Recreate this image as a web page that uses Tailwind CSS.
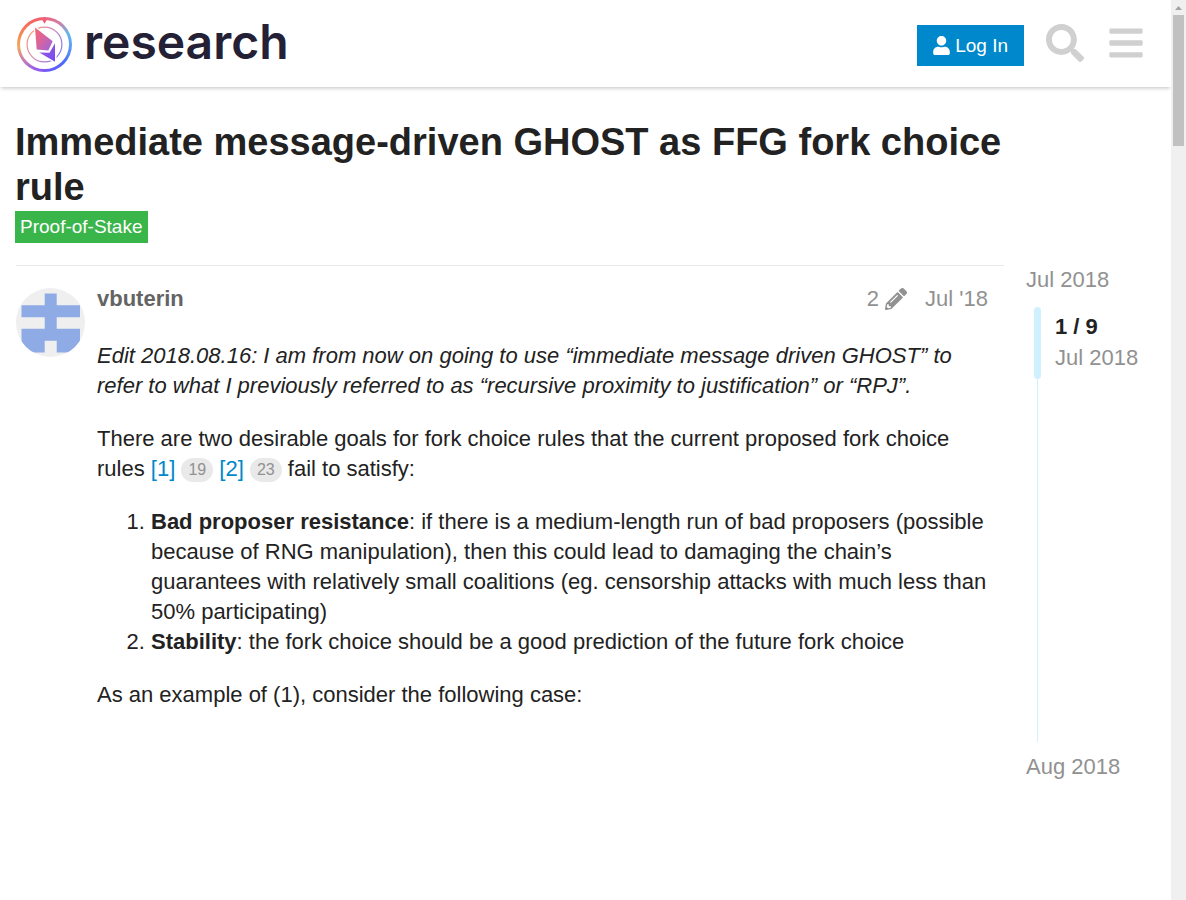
<!DOCTYPE html>
<html lang="en">
<head>
<meta charset="utf-8">
<meta name="viewport" content="width=device-width, initial-scale=1">
<title>Immediate message-driven GHOST as FFG fork choice rule</title>
<script src="https://cdn.jsdelivr.net/npm/@tailwindcss/browser@4"></script>
</head>
<body class="flex h-screen overflow-hidden bg-white font-['Liberation_Sans',Arial,sans-serif] text-[22px] leading-[30px] text-[#222]">
<div class="min-w-0 flex-1 overflow-hidden">
  <header class="flex h-[87px] items-center justify-between pr-7 pl-[17px] shadow-[0_2px_4px_-1px_rgba(0,0,0,0.25)]">
    <a href="#" class="flex items-center gap-3 pt-px text-[#242136]" aria-label="research home">
      <span class="grid size-[55px] place-items-center rounded-full bg-[conic-gradient(#f0607a,#d07fa8_35deg,#63b8ea_65deg,#5b9cf8_95deg,#4d6cfb_130deg,#6a5af8_170deg,#9a5cec_200deg,#c97fb0_235deg,#f3a95e_265deg,#f78a50_290deg,#f4675f_330deg,#f0607a)]">
        <span class="grid size-[49px] place-items-center rounded-full bg-white">
          <svg class="size-[49px]" viewBox="20 19.5 49 49" aria-hidden="true">
            <defs>
              <linearGradient id="kite" x1="0" y1="0" x2="1" y2="1"><stop offset="0" stop-color="#f8646c"/><stop offset=".45" stop-color="#d9659c"/><stop offset="1" stop-color="#9a62e0"/></linearGradient>
              <linearGradient id="fin" x1="0" y1="0" x2="1" y2="1"><stop offset="0" stop-color="#a75bd5"/><stop offset="1" stop-color="#6f4cf6"/></linearGradient>
              <linearGradient id="ring" x1="0" y1="0.2" x2="1" y2="0.8"><stop offset="0" stop-color="#f79a72"/><stop offset=".5" stop-color="#d084b8"/><stop offset="1" stop-color="#7c76f7"/></linearGradient>
            </defs>
            <circle cx="44.5" cy="44" r="17.4" fill="none" stroke="url(#ring)" stroke-width="1.2"/>
            <path d="M33.5 24.5 55.5 40 50 51.5 35.5 50.5z" fill="#fff"/>
            <path d="M50 50.5 56.5 38V64L37 51z" fill="#fff"/>
            <path d="M35 27 52.7 40.7 48.3 50 36.7 49z" fill="url(#kite)"/>
            <path d="M39.3 52 49.5 52.3 55 42.7V61.3z" fill="url(#fin)"/>
            <path d="M41.7 18.5H47.3L44.5 23.3z" fill="#ef5f70"/>
          </svg>
        </span>
      </span>
      <span class="pb-[6px] font-[Inter,sans-serif] text-[48px] leading-[49px] font-semibold">research</span>
    </a>
    <nav class="flex items-center">
      <button class="mt-1 mr-[22px] flex h-[41px] items-center gap-[5px] bg-[#0088cc] px-4 text-[19px] text-white">
        <svg class="h-[19px] w-[17px]" viewBox="0 0 448 512" fill="currentColor" aria-hidden="true"><path d="M224 256c70.7 0 128-57.3 128-128S294.7 0 224 0 96 57.3 96 128s57.3 128 128 128zm89.6 32h-16.7c-22.2 10.2-46.9 16-72.9 16s-50.6-5.8-72.9-16h-16.7C60.2 288 0 348.2 0 422.4V464c0 26.5 21.5 48 48 48h352c26.5 0 48-21.5 48-48v-41.6c0-74.2-60.2-134.4-134.4-134.4z"/></svg>
        <span>Log In</span>
      </button>
      <button class="mr-[25px] pb-[2px] text-[#d0d0d0]" aria-label="Search">
        <svg class="block size-[38px]" viewBox="0 0 512 512" fill="currentColor" aria-hidden="true"><path d="M505 442.7L405.3 343c-4.5-4.5-10.6-7-17-7H372c27.6-35.3 44-79.7 44-128C416 93.1 322.9 0 208 0S0 93.1 0 208s93.1 208 208 208c48.3 0 92.7-16.4 128-44v16.3c0 6.4 2.5 12.5 7 17l99.7 99.7c9.4 9.4 24.6 9.4 33.9 0l28.3-28.3c9.4-9.4 9.4-24.6.1-34zM208 336c-70.7 0-128-57.2-128-128 0-70.7 57.2-128 128-128 70.7 0 128 57.2 128 128 0 70.7-57.2 128-128 128z"/></svg>
      </button>
      <button class="pb-[2px] text-[#d0d0d0]" aria-label="Menu">
        <svg class="block h-[38px] w-[34px]" viewBox="0 0 448 512" fill="currentColor" aria-hidden="true"><path d="M16 132h416c8.837 0 16-7.163 16-16V76c0-8.837-7.163-16-16-16H16C7.163 60 0 67.163 0 76v40c0 8.837 7.163 16 16 16zm0 160h416c8.837 0 16-7.163 16-16v-40c0-8.837-7.163-16-16-16H16c-8.837 0-16 7.163-16 16v40c0 8.837 7.163 16 16 16zm0 160h416c8.837 0 16-7.163 16-16v-40c0-8.837-7.163-16-16-16H16c-8.837 0-16 7.163-16 16v40c0 8.837 7.163 16 16 16z"/></svg>
      </button>
    </nav>
  </header>

  <main class="px-[15px] pt-[33px]">
    <div class="mr-[130px]">
      <h1 class="text-[38px] leading-[45px] font-bold">Immediate message-driven GHOST as FFG fork choice rule</h1>
      <a href="#" class="mt-px block w-fit bg-[#3ab54a] px-[5px] py-px text-[19px] text-white">Proof-of-Stake</a>
    </div>
    <div class="mt-[22px] grid grid-cols-[minmax(0,1fr)_130px] gap-x-[22px]">
      <article class="ml-px flex gap-3 border-t border-[#e9e9e9] pt-[22px]">
        <a href="#" class="shrink-0" aria-label="vbuterin">
          <svg class="size-[69px]" viewBox="0 0 69 69" aria-hidden="true">
            <clipPath id="avatar"><circle cx="34.5" cy="34.5" r="34.5"/></clipPath>
            <g clip-path="url(#avatar)">
              <path d="M0 0h69v69H0z" fill="#efefef"/>
              <path d="M28.7 5.5H40.7V17.3H64V29.3H40.7V40.7H64V64.5H40.7V52.7H28.7V64.5H5.5V40.7H28.7V29.3H5.5V17.3H28.7z" fill="#8fabe6"/>
            </g>
          </svg>
        </a>
        <div class="min-w-0 flex-1">
          <div class="-mt-1 mr-4 flex items-center justify-between text-[#919191]">
            <a href="#" class="font-bold text-[#646464]">vbuterin</a>
            <div class="flex items-center gap-[18px]">
              <button class="flex items-center gap-[6px]">2
                <svg class="size-[22px]" viewBox="0 0 512 512" fill="currentColor" aria-label="edits"><path d="M497.9 142.1l-46.1 46.1c-4.7 4.7-12.3 4.7-17 0l-111-111c-4.7-4.7-4.7-12.3 0-17l46.1-46.1c18.7-18.7 49.1-18.7 67.9 0l60.1 60.1c18.8 18.7 18.8 49.1 0 67.9zM284.2 99.8L21.6 362.4.4 483.9c-2.9 16.4 11.4 30.6 27.8 27.8l121.5-21.3 262.6-262.6c4.7-4.7 4.7-12.3 0-17l-111-111c-4.8-4.7-12.4-4.7-17.1 0zM124.1 339.9c-5.5-5.5-5.5-14.3 0-19.8l154-154c5.5-5.5 14.3-5.5 19.8 0s5.5 14.3 0 19.8l-154 154c-5.5 5.5-14.3 5.5-19.8 0zM88 424h48v36.3l-64.5 11.3-31.1-31.1L51.7 376H88v48z"/></svg>
              </button>
              <a href="#">Jul '18</a>
            </div>
          </div>
          <div class="mt-[27px] mr-3 flex flex-col gap-[23px]">
            <p class="italic">Edit 2018.08.16: I am from now on going to use “immediate message driven GHOST” to refer to what I previously referred to as “recursive proximity to justification” or “RPJ”.</p>
            <p>There are two desirable goals for fork choice rules that the current proposed fork choice rules <a href="#" class="text-[#0088cc]">[1]</a> <span class="inline-block rounded-full bg-[#e9e9e9] px-[7px] align-[1px] text-[16px] leading-6 text-[#919191]">19</span> <a href="#" class="text-[#0088cc]">[2]</a> <span class="inline-block rounded-full bg-[#e9e9e9] px-[7px] align-[1px] text-[16px] leading-6 text-[#919191]">23</span> fail to satisfy:</p>
            <ol class="list-decimal pl-[54px]">
              <li><strong>Bad proposer resistance</strong>: if there is a medium-length run of bad proposers (possible because of RNG manipulation), then this could lead to damaging the chain’s guarantees with relatively small coalitions (eg. censorship attacks with much less than 50% participating)</li>
              <li><strong>Stability</strong>: the fork choice should be a good prediction of the future fork choice</li>
            </ol>
            <p>As an example of (1), consider the following case:</p>
          </div>
        </div>
      </article>
      <aside class="text-[#919191]">
        <a href="#" class="block">Jul 2018</a>
        <div class="mt-3 ml-2 flex gap-[14px]">
          <div class="flex w-[7px] flex-col">
            <div class="h-[72px] rounded-full bg-[#d1f0ff]"></div>
            <div class="ml-[3px] h-[363px] w-px bg-[#d1f0ff]"></div>
          </div>
          <div class="pt-[5px]">
            <div class="font-bold text-[#222]">1 / 9</div>
            <div class="mt-px">Jul 2018</div>
          </div>
        </div>
        <a href="#" class="mt-[10px] block">Aug 2018</a>
      </aside>
    </div>
  </main>
</div>
<div class="flex w-[15px] shrink-0 flex-col items-center bg-[#f0f0f0]" aria-hidden="true">
  <svg class="h-[15px] w-[15px] shrink-0" viewBox="0 0 15 15"><path d="M4 10 7.5 6 11 10z" fill="#a3a3a3"/></svg>
  <div class="h-[131px] w-[11px] bg-[#c1c1c1]"></div>
</div>
</body>
</html>
